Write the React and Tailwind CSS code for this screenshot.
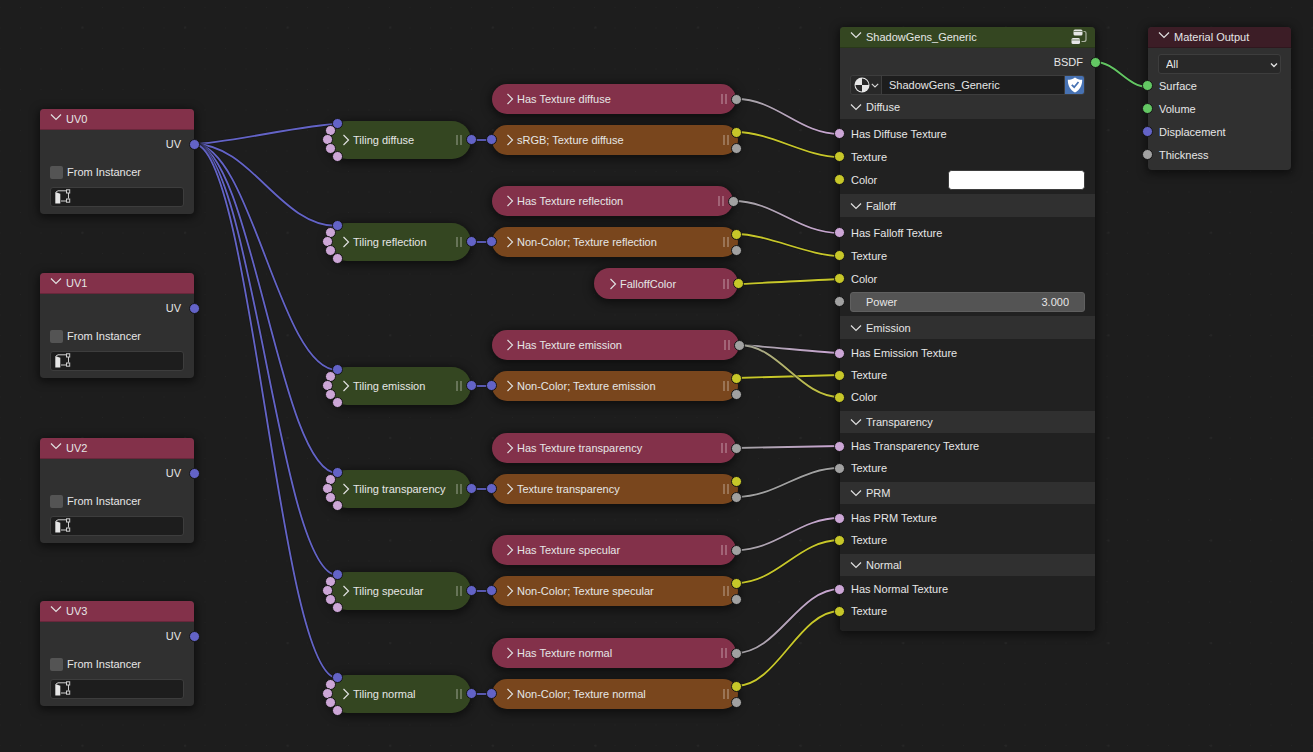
const SOCKET = {
  vector: "bg-[#6363c7]",
  color: "bg-[#c7c729]",
  float: "bg-[#a1a1a1]",
  shader: "bg-[#63c763]",
  bool: "bg-[#cca6d6]",
};

const HEX = {
  vector: "#6363c7",
  color: "#c7c729",
  float: "#a1a1a1",
  shader: "#63c763",
  bool: "#cca6d6",
};

const NODE_SHADOW = "shadow-[0_2px_8px_2px_rgba(0,0,0,0.5)]";

const UV_NODES = [
  { name: "UV0", y: 109 },
  { name: "UV1", y: 273 },
  { name: "UV2", y: 438 },
  { name: "UV3", y: 601 },
];

const ROWS = [
  { key: "diffuse", y: 99, hasWidth: 244, texture: "sRGB; Texture diffuse" },
  { key: "reflection", y: 201, hasWidth: 241, texture: "Non-Color; Texture reflection" },
  { key: "emission", y: 345, hasWidth: 247, texture: "Non-Color; Texture emission" },
  { key: "transparency", y: 448, hasWidth: 244, texture: "Texture transparency" },
  { key: "specular", y: 550, hasWidth: 244, texture: "Non-Color; Texture specular" },
  { key: "normal", y: 653, hasWidth: 244, texture: "Non-Color; Texture normal" },
];

const WIRES = [
  ...ROWS.map((r) => [194, 144, 337, r.y + 25, "vector", "vector"]),
  ...ROWS.map((r) => [471, r.y + 41, 492, r.y + 41, "vector", "vector"]),
  [736, 99, 840, 134, "float", "bool"],
  [736, 132, 840, 157, "color", "color"],
  [733, 201, 840, 233, "float", "bool"],
  [736, 234, 840, 256, "color", "color"],
  [738, 284, 840, 279, "color", "color"],
  [739, 345, 840, 353, "float", "bool"],
  [736, 378, 840, 375, "color", "color"],
  [739, 345, 840, 397, "float", "color"],
  [736, 448, 840, 446, "float", "bool"],
  [736, 497, 840, 468, "float", "float"],
  [736, 550, 840, 518, "float", "bool"],
  [736, 583, 840, 540, "color", "color"],
  [736, 653, 840, 589, "float", "bool"],
  [736, 686, 840, 611, "color", "color"],
  [1095, 62, 1148, 87, "shader", "shader"],
];

const SECTIONS = [
  {
    title: "Diffuse",
    head: "h-[24px]",
    body: "pt-[3px] pb-[3px]",
    row: "h-[23px]",
    rows: [["bool", "Has Diffuse Texture"], ["color", "Texture"], ["color", "Color", "swatch"]],
  },
  {
    title: "Falloff",
    head: "h-[23px]",
    body: "pt-1 pb-[3px]",
    row: "h-[23px]",
    rows: [["bool", "Has Falloff Texture"], ["color", "Texture"], ["color", "Color"], ["float", "Power", "number"]],
  },
  {
    title: "Emission",
    head: "h-[23px]",
    body: "pt-[3px] pb-[3px]",
    row: "h-[22px]",
    rows: [["bool", "Has Emission Texture"], ["color", "Texture"], ["color", "Color"]],
  },
  {
    title: "Transparency",
    head: "h-[22px]",
    body: "pt-[2px] pb-[3px]",
    row: "h-[22px]",
    rows: [["bool", "Has Transparency Texture"], ["float", "Texture"]],
  },
  {
    title: "PRM",
    head: "h-[22px]",
    body: "pt-[3px] pb-[3px]",
    row: "h-[22px]",
    rows: [["bool", "Has PRM Texture"], ["color", "Texture"]],
  },
  {
    title: "Normal",
    head: "h-[22px]",
    body: "pt-[2px] pb-[9px]",
    row: "h-[22px]",
    rows: [["bool", "Has Normal Texture"], ["color", "Texture"]],
  },
];

function wirePath([x1, y1, x2, y2]) {
  const dx = x2 - x1;
  const clamp = Math.min(1, (Math.abs(y2 - y1) / dx) * 3.5);
  const handle = dx * 0.4 * clamp;
  return `M${x1} ${y1}C${x1 + handle} ${y1} ${x2 - handle} ${y2} ${x2} ${y2}`;
}

function Canvas() {
  return (
    <svg className="absolute inset-0 h-full w-full" aria-hidden="true">
      <defs>
        <pattern id="minor" x="20" y="7" width="20.5" height="20.5" patternUnits="userSpaceOnUse">
          <rect width="1" height="1" fill="#242424" />
        </pattern>
        <pattern id="major" x="81.5" y="26.5" width="102.6" height="102.6" patternUnits="userSpaceOnUse">
          <rect width="2" height="2" fill="#262626" />
        </pattern>
        {WIRES.map((w, i) => (
          <linearGradient key={i} id={`wire${i}`} gradientUnits="userSpaceOnUse" x1={w[0]} y1={w[1]} x2={w[2]} y2={w[1]}>
            <stop offset="0" stopColor={HEX[w[4]]} />
            <stop offset="1" stopColor={HEX[w[5]]} />
          </linearGradient>
        ))}
      </defs>
      <rect width="100%" height="100%" fill="url(#minor)" />
      <rect width="100%" height="100%" fill="url(#major)" />
    </svg>
  );
}

function Wires() {
  return (
    <svg className="pointer-events-none absolute inset-0 h-full w-full" fill="none" aria-hidden="true">
      {WIRES.map((w, i) => (
        <g key={i}>
          <path d={wirePath(w)} stroke="#141414" strokeOpacity="0.6" strokeWidth="3.4" />
          <path d={wirePath(w)} stroke={`url(#wire${i})`} strokeWidth="1.8" />
        </g>
      ))}
    </svg>
  );
}

function Socket({ type, className }) {
  return <span className={`absolute size-[11px] rounded-full border border-[#151515] ${SOCKET[type]} ${className}`} />;
}

function ChevronDown() {
  return (
    <svg className="h-[8px] w-[12px] shrink-0" viewBox="0 0 12 8" fill="none" stroke="#e0e0e0" strokeWidth="1.2" aria-hidden="true">
      <path d="M1 1.5 6 6.5 11 1.5" />
    </svg>
  );
}

function ChevronRight() {
  return (
    <svg className="h-[12px] w-[8px] shrink-0" viewBox="0 0 8 12" fill="none" stroke="#e0e0e0" strokeWidth="1.2" aria-hidden="true">
      <path d="M1.5 1 6.5 6 1.5 11" />
    </svg>
  );
}

function NodeHeader({ title, tone, children }) {
  return (
    <div className={`flex h-[21px] items-center rounded-t border-b border-black/20 pr-2 pl-[10px] ${tone}`}>
      <button type="button" aria-expanded="true" className="flex flex-1 items-center gap-1 text-left">
        <span className="pb-1">
          <ChevronDown />
        </span>
        <span>{title}</span>
      </button>
      {children}
    </div>
  );
}

function UVNode({ name, y }) {
  return (
    <section className={`absolute left-[40px] w-[154px] rounded bg-[#303030] ${NODE_SHADOW}`} style={{ top: y }}>
      <NodeHeader title={name} tone="bg-[#83314a]" />
      <div className="relative flex h-[28px] items-center justify-end pr-[13px]">
        UV
        <Socket type="vector" className="top-[9px] right-[-6px]" />
      </div>
      <div className="px-[10px] pt-[4px] pb-[7px]">
        <label className="flex h-[20px] items-center gap-1">
          <input type="checkbox" className="size-[13px] appearance-none rounded-[2px] bg-[#545454] checked:bg-[#4772b3]" />
          From Instancer
        </label>
        <div className="mt-[5px] flex h-[20px] items-center rounded-[3px] border border-[#3d3d3d] bg-[#1d1d1d] pl-1">
          <svg className="size-[16px] shrink-0" viewBox="0 0 16 16" fill="none" stroke="#cfcfcf" aria-hidden="true">
            <path d="M1 3 3 1.800H11.500M13.500 4V9.500M11.500 12H6" />
            <rect x="11.500" y=".8" width="3.200" height="3.200" />
            <rect x="11.500" y="10" width="3.200" height="3.200" />
            <path d="M.3 3 5.300 4.800V14.500H.3z" fill="#e6e6e6" stroke="none" />
          </svg>
          <input type="text" aria-label={`${name} map`} className="w-full min-w-0 bg-transparent px-1 outline-none" />
        </div>
      </div>
    </section>
  );
}

function Grip() {
  return <span className="ml-auto h-[10px] w-[6px] border-x-2 border-white/25" />;
}

function Pill({ title, tone, className, style, children }) {
  return (
    <section className={`absolute flex items-center rounded-full ${tone} ${className} ${NODE_SHADOW}`} style={style}>
      <button type="button" aria-expanded="false" className="flex items-center gap-[3px] whitespace-nowrap">
        <ChevronRight />
        <span>{title}</span>
      </button>
      <Grip />
      {children}
    </section>
  );
}

function TextureRow({ row }) {
  return (
    <>
      <Pill
        title={`Has Texture ${row.key}`}
        tone="bg-[#83314a]"
        className="left-[492px] h-[30px] pr-[9px] pl-[14px]"
        style={{ top: row.y - 15, width: row.hasWidth }}
      >
        <Socket type="float" className="top-[10px] right-[-6px]" />
      </Pill>
      <Pill
        title={`Tiling ${row.key}`}
        tone="bg-[#344621]"
        className="left-[328px] h-[38px] w-[143px] pr-[9px] pl-[14px]"
        style={{ top: row.y + 22 }}
      >
        <Socket type="vector" className="top-[-3px] left-[4px]" />
        <Socket type="bool" className="top-[4px] left-[-3px]" />
        <Socket type="bool" className="top-[13px] left-[-6px]" />
        <Socket type="bool" className="top-[22px] left-[-3px]" />
        <Socket type="bool" className="top-[30px] left-[4px]" />
        <Socket type="vector" className="top-[13px] right-[-6px]" />
      </Pill>
      <Pill
        title={row.texture}
        tone="bg-[#79461d]"
        className="left-[492px] h-[30px] w-[246px] pr-[9px] pl-[14px]"
        style={{ top: row.y + 26 }}
      >
        <Socket type="vector" className="top-[9px] left-[-6px]" />
        <Socket type="color" className="top-[2px] right-[-4px]" />
        <Socket type="float" className="top-[18px] right-[-4px]" />
      </Pill>
    </>
  );
}

function SectionRow({ type, label, control, height, id }) {
  return (
    <div className={`relative flex items-center justify-between px-[11px] ${height}`}>
      <Socket type={type} className="top-[6px] left-[-6px]" />
      {control === "number" ? (
        <label className="-mx-px flex h-[20px] flex-1 items-center justify-between rounded-[3px] border border-[#606060] bg-[#545454] px-[15px]">
          {label}
          <input type="text" inputMode="decimal" defaultValue="3.000" className="w-[60px] bg-transparent text-right outline-none" />
        </label>
      ) : (
        <label htmlFor={control ? id : undefined}>{label}</label>
      )}
      {control === "swatch" && (
        <input
          id={id}
          type="color"
          defaultValue="#ffffff"
          className="-mr-px h-[20px] w-[137px] appearance-none rounded-[4px] border border-[#3d3d3d] bg-white p-0 [&::-webkit-color-swatch]:rounded-[3px] [&::-webkit-color-swatch]:border-0 [&::-webkit-color-swatch-wrapper]:p-0"
        />
      )}
    </div>
  );
}

function GroupNode() {
  return (
    <section className={`absolute top-[27px] left-[840px] w-[255px] rounded bg-[#303030] ${NODE_SHADOW}`}>
      <NodeHeader title="ShadowGens_Generic" tone="bg-[#344621]">
        <svg className="size-[16px]" viewBox="0 0 16 16" aria-hidden="true">
          <rect x="2.500" y=".5" width="9" height="6" rx="1.500" fill="#e6e6e6" />
          <rect x=".5" y="9" width="8.500" height="6" rx="1.500" fill="#e6e6e6" />
          <path d="M2.500 2.500H11.500M.5 11H9" stroke="#344621" strokeWidth=".6" />
          <path d="M12.500 2.500H13.500Q15 2.500 15 4V10.500Q15 12.500 13 12.500H10.500" fill="none" stroke="#a9b09f" strokeWidth="1.200" />
        </svg>
      </NodeHeader>
      <div className="relative flex h-[27px] items-center justify-end pr-3">
        BSDF
        <Socket type="shader" className="top-[9px] right-[-6px]" />
      </div>
      <div className="mx-[10px] flex h-[20px] overflow-hidden rounded-[3px] border border-[#3d3d3d]">
        <button type="button" aria-label="Browse node groups" className="flex w-[30px] items-center justify-center gap-px bg-[#282828]">
          <svg className="size-[16px]" viewBox="0 0 16 16" aria-hidden="true">
            <circle cx="8" cy="8" r="7.500" fill="#e6e6e6" />
            <path d="M8 1.500A6.500 6.500 0 0 1 14.500 8H8zM8 14.500A6.500 6.500 0 0 1 1.500 8H8z" fill="#282828" />
          </svg>
          <svg className="size-[8px]" viewBox="0 0 8 8" fill="none" stroke="#d9d9d9" strokeWidth="1.100" aria-hidden="true">
            <path d="M.8 2.800 4 6 7.200 2.800" />
          </svg>
        </button>
        <input
          type="text"
          aria-label="Node group name"
          defaultValue="ShadowGens_Generic"
          className="min-w-0 flex-1 border-x border-[#3d3d3d] bg-[#1d1d1d] px-[7px] outline-none"
        />
        <button type="button" aria-label="Fake user" aria-pressed="true" className="flex w-[19px] items-center justify-center bg-[#4772b3]">
          <svg className="size-[16px]" viewBox="0 0 16 16" fill="none" aria-hidden="true">
            <path d="M8 .5C6 2.200 3.500 2.800 .8 2.800 .8 8.500 3 13 8 15.500 13 13 15.200 8.500 15.200 2.800 12.500 2.800 10 2.200 8 .5z" fill="#fff" />
            <path d="M4.800 7.800 7.200 10.200 11.500 5" stroke="#4772b3" strokeWidth="1.800" />
          </svg>
        </button>
      </div>
      <div className="rounded-b bg-[#212121]">
        {SECTIONS.map((s) => (
          <div key={s.title}>
            <button type="button" aria-expanded="true" className={`flex w-full items-center gap-1 bg-[#303030] pl-[10px] text-left ${s.head}`}>
              <ChevronDown />
              {s.title}
            </button>
            <div className={s.body}>
              {s.rows.map(([type, label, control]) => (
                <SectionRow key={label} type={type} label={label} control={control} height={s.row} id={`${s.title}-${label}`} />
              ))}
            </div>
          </div>
        ))}
      </div>
    </section>
  );
}

function OutputNode() {
  const inputs = [
    ["shader", "Surface"],
    ["shader", "Volume"],
    ["vector", "Displacement"],
    ["float", "Thickness"],
  ];
  return (
    <section className={`absolute top-[27px] left-[1148px] w-[143px] rounded bg-[#303030] pb-[4px] ${NODE_SHADOW}`}>
      <NodeHeader title="Material Output" tone="bg-[#3c1d26]" />
      <div className="relative mx-[10px] mt-[6px]">
        <select aria-label="Target" className="block h-[20px] w-full appearance-none rounded-[3px] border border-[#3d3d3d] bg-[#282828] px-[7px] outline-none">
          <option>All</option>
          <option>EEVEE</option>
          <option>Cycles</option>
        </select>
        <svg className="pointer-events-none absolute top-[7px] right-[3px] size-[8px]" viewBox="0 0 8 8" fill="none" stroke="#e0e0e0" strokeWidth="1.400" aria-hidden="true">
          <path d="M1 2.500 4 5.500 7 2.500" />
        </svg>
      </div>
      {inputs.map(([type, label]) => (
        <div key={label} className="relative flex h-[23px] items-center pl-[11px]">
          <Socket type={type} className="top-[6px] left-[-6px]" />
          {label}
        </div>
      ))}
    </section>
  );
}

export default function App() {
  return (
    <main className="relative min-h-screen overflow-hidden bg-[#1d1d1d] font-['Liberation_Sans',Arial,sans-serif] text-[11px] leading-[14px] text-[#e6e6e6]">
      <Canvas />
      <Wires />
      {UV_NODES.map((n) => (
        <UVNode key={n.name} {...n} />
      ))}
      {ROWS.map((r) => (
        <TextureRow key={r.key} row={r} />
      ))}
      <Pill title="FalloffColor" tone="bg-[#83314a]" className="top-[268px] left-[594px] h-[31px] w-[144px] pr-[9px] pl-[15px]">
        <Socket type="color" className="top-[10px] right-[-6px]" />
      </Pill>
      <GroupNode />
      <OutputNode />
    </main>
  );
}
